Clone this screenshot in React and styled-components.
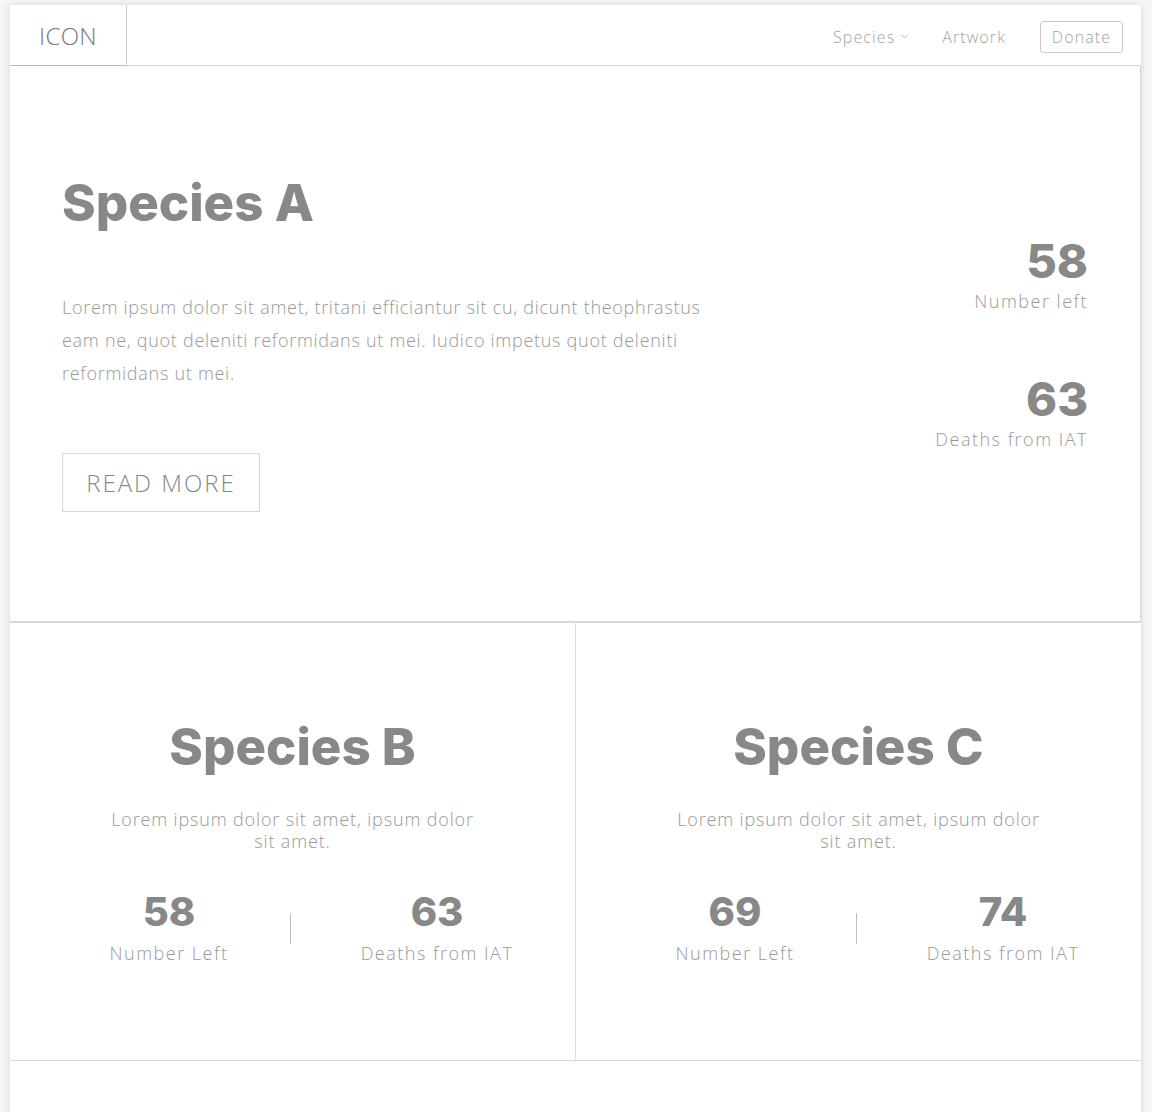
import React from "react";
import styled, { createGlobalStyle } from "styled-components";

const LIGHT = `"Open Sans", Lato, "DejaVu Sans", sans-serif`;
const BOLD = `Inter, "DejaVu Sans", sans-serif`;

const Global = createGlobalStyle`
  html, body { margin: 0; padding: 0; overflow: hidden; }
  body {
    background: #f6f6f6;
    font-family: ${LIGHT};
    color: #888;
  }
  * { box-sizing: border-box; }
`;

const Page = styled.div`
  margin: 5px 11px 0 10px;
  background: #fff;
  box-shadow: 0 0 8px rgba(0, 0, 0, 0.13);
`;

const Header = styled.header`
  height: 61px;
  display: flex;
  align-items: stretch;
  justify-content: space-between;
  border-bottom: 1px solid #d4d4d4;
`;

const Logo = styled.div`
  width: 117px;
  border-right: 1px solid #cfcfcf;
  border-bottom: 1px solid #bbb;
  margin-bottom: -1px;
  display: flex;
  align-items: center;
  justify-content: center;
  font-family: "Open Sans", sans-serif;
  font-weight: 300;
  font-size: 24px;
  color: #777;
  letter-spacing: 0.3px;
  padding-top: 1px;
`;

const Nav = styled.nav`
  display: flex;
  align-items: center;
  gap: 34px;
  padding: 3px 18px 0 0;
`;

const NavLink = styled.a`
  display: flex;
  align-items: center;
  gap: 6px;
  font-weight: 300;
  font-size: 16px;
  color: #a3a3a3;
  text-decoration: none;
  letter-spacing: 1.1px;
`;

const DonateButton = styled.button`
  height: 32px;
  width: 83px;
  padding: 0;
  border: 1px solid #c9c9c9;
  border-radius: 3px;
  background: #fff;
  font-family: inherit;
  font-weight: 300;
  font-size: 16px;
  color: #a3a3a3;
  letter-spacing: 1.1px;
`;

const Hero = styled.section`
  height: 557px;
  border-bottom: 2px solid #d8d8d8;
  border-right: 1px solid #d4d4d4;
  display: flex;
  align-items: center;
  justify-content: space-between;
  padding: 0 52px 0 52px;
`;

const HeroText = styled.div`
  width: 660px;
  padding-top: 2px;
`;

const Title = styled.h1`
  margin: 0;
  font-family: ${BOLD};
  font-weight: 800;
  font-size: 51px;
  line-height: 52px;
  color: #888;
  letter-spacing: 0px;
  text-align: ${(p) => (p.$center ? "center" : "left")};
`;

const HeroParagraph = styled.p`
  margin: 62px 0 63px;
  font-weight: 300;
  font-size: 18px;
  line-height: 33px;
  color: #999;
  letter-spacing: 0.72px;
`;

const OutlineButton = styled.button`
  width: 198px;
  height: 59px;
  padding: 0;
  border: 1px solid #d6d6d6;
  background: #fff;
  font-family: inherit;
  font-weight: 300;
  font-size: 24px;
  color: #888;
  letter-spacing: 2px;
`;

const HeroStats = styled.div`
  display: flex;
  flex-direction: column;
  align-items: flex-end;
  gap: 62px;
`;

const StatBlock = styled.div`
  display: flex;
  flex-direction: column;
  align-items: ${(p) => (p.$align === "center" ? "center" : "flex-end")};
`;

const BigNumber = styled.div`
  font-family: ${BOLD};
  font-weight: 800;
  font-size: ${(p) => p.$size}px;
  line-height: 1;
  color: #888;
`;

const StatLabel = styled.div`
  font-weight: 300;
  font-size: 18px;
  line-height: 24px;
  margin-top: ${(p) => p.$gap}px;
  color: #999;
  letter-spacing: 1.5px;
  white-space: nowrap;
`;

const CardRow = styled.section`
  display: grid;
  grid-template-columns: 565px 1fr;
  border-bottom: 1px solid #d8d8d8;
`;

const Card = styled.div`
  height: 437px;
  display: flex;
  flex-direction: column;
  align-items: center;
  padding-top: 98px;
  border-left: ${(p) => (p.$divider ? "1px solid #dedede" : "none")};
`;

const CardParagraph = styled.p`
  margin: 35px 0 0;
  max-width: 372px;
  text-align: center;
  font-weight: 300;
  font-size: 18px;
  line-height: 22px;
  color: #999;
  letter-spacing: 0.85px;
`;

const StatsRow = styled.div`
  align-self: stretch;
  display: flex;
  align-items: center;
  padding-left: 79px;
  margin-top: 40px;
`;

const StatCol = styled.div`
  width: ${(p) => p.$w}px;
  display: flex;
  justify-content: center;
`;

const Divider = styled.div`
  width: 1px;
  height: 31px;
  background: #bdbdbd;
  margin: 0 46px 0 41px;
`;

const Bottom = styled.section`
  height: 60px;
`;

const Chevron = () => (
  <svg width="7" height="5" viewBox="0 0 7 5" fill="none">
    <path d="M0.5 1 L3.5 4 L6.5 1" stroke="#aaa" strokeWidth="0.9" />
  </svg>
);

const SmallStats = ({ a, b }) => (
  <StatsRow>
    <StatCol $w={160}>
      <StatBlock $align="center">
        <BigNumber $size={40}>{a}</BigNumber>
        <StatLabel $gap={9}>Number Left</StatLabel>
      </StatBlock>
    </StatCol>
    <Divider />
    <StatCol $w={200}>
      <StatBlock $align="center">
        <BigNumber $size={40}>{b}</BigNumber>
        <StatLabel $gap={9}>Deaths from IAT</StatLabel>
      </StatBlock>
    </StatCol>
  </StatsRow>
);

export default function App() {
  return (
    <>
      <Global />
      <Page>
        <Header>
          <Logo>ICON</Logo>
          <Nav>
            <NavLink href="#">
              Species <Chevron />
            </NavLink>
            <NavLink href="#">Artwork</NavLink>
            <DonateButton>Donate</DonateButton>
          </Nav>
        </Header>
        <Hero>
          <HeroText>
            <Title>Species A</Title>
            <HeroParagraph>
              Lorem ipsum dolor sit amet, tritani efficiantur sit cu, dicunt theophrastus eam ne,
              quot deleniti reformidans ut mei. Iudico impetus quot deleniti reformidans ut mei.
            </HeroParagraph>
            <OutlineButton>READ MORE</OutlineButton>
          </HeroText>
          <HeroStats>
            <StatBlock>
              <BigNumber $size={47}>58</BigNumber>
              <StatLabel $gap={5}>Number left</StatLabel>
            </StatBlock>
            <StatBlock>
              <BigNumber $size={47}>63</BigNumber>
              <StatLabel $gap={5}>Deaths from IAT</StatLabel>
            </StatBlock>
          </HeroStats>
        </Hero>
        <CardRow>
          <Card>
            <Title $center>Species B</Title>
            <CardParagraph>Lorem ipsum dolor sit amet, ipsum dolor sit amet.</CardParagraph>
            <SmallStats a="58" b="63" />
          </Card>
          <Card $divider>
            <Title $center>Species C</Title>
            <CardParagraph>Lorem ipsum dolor sit amet, ipsum dolor sit amet.</CardParagraph>
            <SmallStats a="69" b="74" />
          </Card>
        </CardRow>
        <Bottom />
      </Page>
    </>
  );
}
